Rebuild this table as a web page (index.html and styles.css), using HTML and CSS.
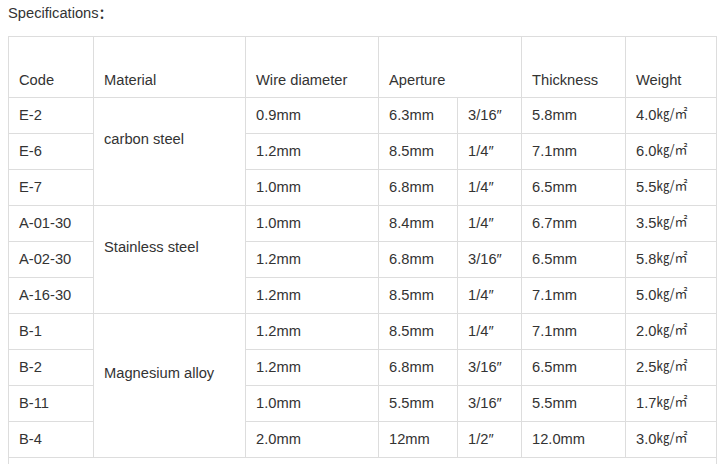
FILE: index.html
```html
<!DOCTYPE html>
<html>
<head>
<meta charset="utf-8">
<link rel="stylesheet" href="styles.css">
</head>
<body>
<div class="page">
  <div class="title">Specifications<span class="colon">：</span></div>
  <table class="spec">
    <colgroup>
      <col class="c-code"><col class="c-mat"><col class="c-wire"><col class="c-ap1"><col class="c-ap2"><col class="c-thk"><col class="c-wt">
    </colgroup>
    <tr class="head">
      <td>Code</td><td>Material</td><td>Wire diameter</td><td colspan="2">Aperture</td><td>Thickness</td><td>Weight</td>
    </tr>
    <tr><td>E-2</td><td rowspan="3" class="merged">carbon steel</td><td>0.9mm</td><td>6.3mm</td><td>3/16″</td><td>5.8mm</td><td>4.0<span class="u">㎏/㎡</span></td></tr>
    <tr><td>E-6</td><td>1.2mm</td><td>8.5mm</td><td>1/4″</td><td>7.1mm</td><td>6.0<span class="u">㎏/㎡</span></td></tr>
    <tr><td>E-7</td><td>1.0mm</td><td>6.8mm</td><td>1/4″</td><td>6.5mm</td><td>5.5<span class="u">㎏/㎡</span></td></tr>
    <tr><td>A-01-30</td><td rowspan="3" class="merged">Stainless steel</td><td>1.0mm</td><td>8.4mm</td><td>1/4″</td><td>6.7mm</td><td>3.5<span class="u">㎏/㎡</span></td></tr>
    <tr><td>A-02-30</td><td>1.2mm</td><td>6.8mm</td><td>3/16″</td><td>6.5mm</td><td>5.8<span class="u">㎏/㎡</span></td></tr>
    <tr><td>A-16-30</td><td>1.2mm</td><td>8.5mm</td><td>1/4″</td><td>7.1mm</td><td>5.0<span class="u">㎏/㎡</span></td></tr>
    <tr><td>B-1</td><td rowspan="4" class="merged">Magnesium alloy</td><td>1.2mm</td><td>8.5mm</td><td>1/4″</td><td>7.1mm</td><td>2.0<span class="u">㎏/㎡</span></td></tr>
    <tr><td>B-2</td><td>1.2mm</td><td>6.8mm</td><td>3/16″</td><td>6.5mm</td><td>2.5<span class="u">㎏/㎡</span></td></tr>
    <tr><td>B-11</td><td>1.0mm</td><td>5.5mm</td><td>3/16″</td><td>5.5mm</td><td>1.7<span class="u">㎏/㎡</span></td></tr>
    <tr><td>B-4</td><td>2.0mm</td><td>12mm</td><td>1/2″</td><td>12.0mm</td><td>3.0<span class="u">㎏/㎡</span></td></tr>
    <tr class="tail"><td colspan="7"></td></tr>
  </table>
</div>
</body>
</html>
```

FILE: styles.css
```css
html, body {
  margin: 0;
  padding: 0;
  background: #fff;
}
body {
  font-family: "Liberation Sans", Arial, "Noto Sans CJK SC", sans-serif;
  font-size: 14.7px;
  color: #333;
}
.page {
  padding: 3px 0 0 8px;
}
.title {
  line-height: 20px;
  margin-bottom: 13px;
}
.colon {
  font-family: "Noto Sans CJK SC", sans-serif;
  font-weight: bold;
  font-size: 13px;
  line-height: 10px;
}
.spec {
  border-collapse: collapse;
  table-layout: fixed;
  width: 708px;
}
.c-code { width: 85px; }
.c-mat { width: 152px; }
.c-wire { width: 133px; }
.c-ap1 { width: 79px; }
.c-ap2 { width: 64px; }
.c-thk { width: 104px; }
.c-wt { width: 91px; }
.spec td {
  border: 1px solid #ddd;
  padding: 8px 10px;
  line-height: 19px;
  vertical-align: middle;
  white-space: nowrap;
}
.spec .head td {
  padding-top: 34px;
  padding-bottom: 7px;
  vertical-align: bottom;
}
.spec td.merged {
  padding-bottom: 32px;
}
.spec .tail td {
  height: 19px;
}
.u {
  font-family: "Noto Sans CJK SC", sans-serif;
  font-size: 13px;
  line-height: 10px;
  vertical-align: 2px;
}
```
